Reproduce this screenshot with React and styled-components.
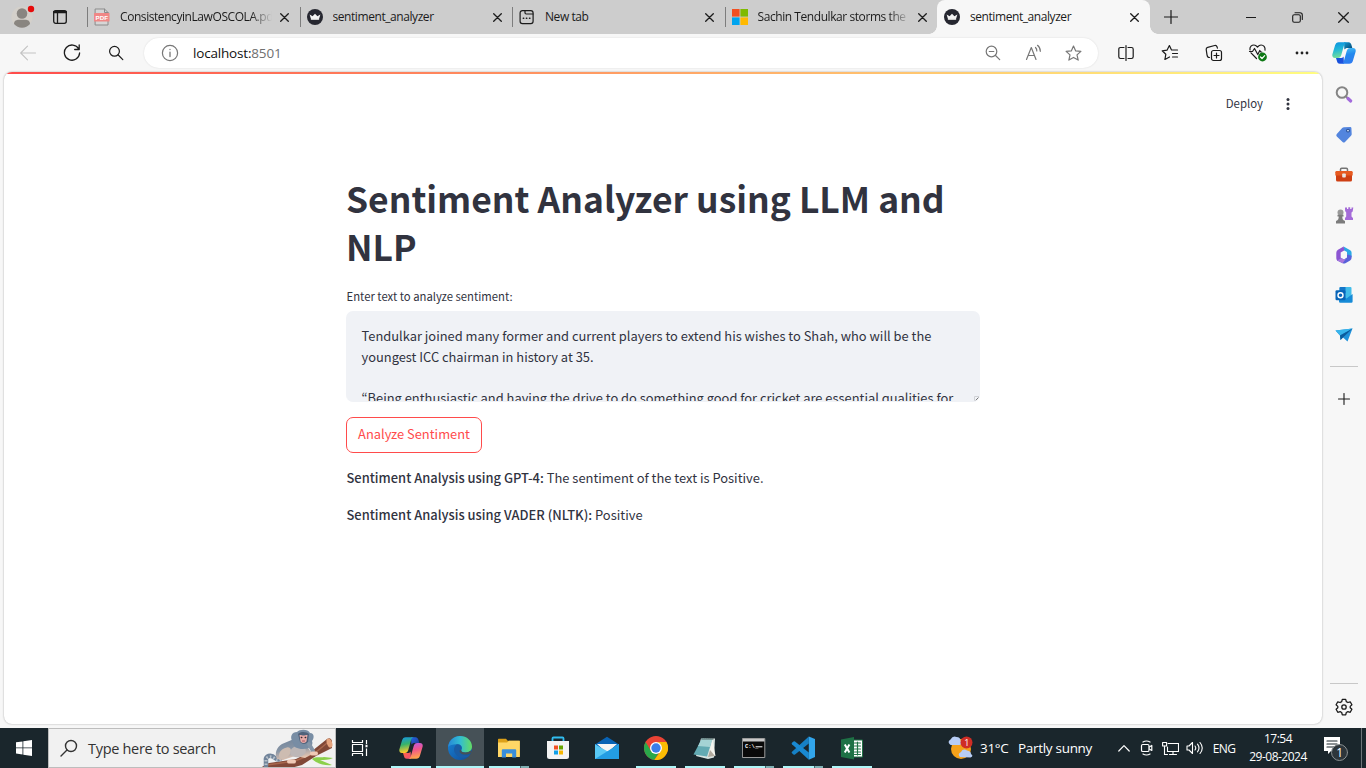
import React from "react";
import styled, { createGlobalStyle } from "styled-components";

const GlobalStyle = createGlobalStyle`
  *, *::before, *::after { box-sizing: border-box; }
  body { margin: 0; overflow: hidden; }
  svg { display: block; flex: none; }
`;

const uiFont = `"Open Sans", "Noto Sans", sans-serif`;
const pageFont = `"Noto Sans CJK KR", "Noto Sans", sans-serif`;

/* ---------- window ---------- */
const Desktop = styled.div`
  width: 1366px;
  height: 768px;
  display: flex;
  flex-direction: column;
  background: #f7f7f7;
  font-family: ${uiFont};
  color: #1b1b1b;
`;
const TabStrip = styled.header`
  display: flex;
  height: 34px;
  background: #cdcdcd;
`;
const StripLead = styled.div`
  display: flex;
  align-items: center;
  width: 87px;
  padding-left: 11px;
  gap: 18px;
`;
const Tab = styled.div`
  position: relative;
  display: flex;
  align-items: center;
  width: 212.5px;
  padding-left: 6px;
  background: ${(p) => (p.$active ? "#f7f7f7" : "transparent")};
  border-radius: ${(p) => (p.$active ? "8px 8px 0 0" : "0")};
  &::before {
    content: "";
    display: ${(p) => (p.$active ? "block" : "none")};
    position: absolute;
    left: -8px;
    bottom: 0;
    width: 8px;
    height: 8px;
    background: radial-gradient(circle at 0 0, #cdcdcd 7.5px, #f7f7f7 8px);
  }
  &::after {
    content: "";
    display: ${(p) => (p.$active ? "block" : "none")};
    position: absolute;
    right: -8px;
    bottom: 0;
    width: 8px;
    height: 8px;
    background: radial-gradient(circle at 100% 0, #cdcdcd 7.5px, #f7f7f7 8px);
  }
`;
const TabRule = styled.span`
  width: 1px;
  height: 20px;
  margin-left: -6px;
  margin-right: 6px;
  background: ${(p) => (p.$hidden ? "transparent" : "#7d7d7d")};
`;
const TabTitle = styled.span`
  width: 152px;
  margin-left: 10px;
  overflow: hidden;
  white-space: nowrap;
  font-size: 12px;
  line-height: 18px;
  letter-spacing: -0.43px;
  ${(p) => p.$fade && "mask-image: linear-gradient(90deg, #000 86%, transparent 100%);"}
`;
const TabClose = styled.div`
  margin-left: 8px;
`;
const NewTab = styled.div`
  display: flex;
  align-items: center;
  width: 43px;
  justify-content: center;
`;
const WindowButtons = styled.div`
  display: flex;
  margin-left: auto;
`;
const WindowButton = styled.div`
  display: flex;
  width: 46px;
  align-items: center;
  justify-content: center;
`;

/* ---------- toolbar ---------- */
const Toolbar = styled.div`
  display: flex;
  align-items: center;
  height: 38px;
  padding-left: 6px;
`;
const ToolCell = styled.div`
  display: flex;
  justify-content: center;
  width: ${(p) => p.$w || 44}px;
`;
const AddressBar = styled.div`
  display: flex;
  align-items: center;
  width: 954px;
  height: 30px;
  margin: 0 6px;
  padding: 0 5px 0 17px;
  border-radius: 15px;
  background: #fff;
  box-shadow: 0 0 2px rgba(0, 0, 0, 0.12);
`;
const Url = styled.span`
  flex: 1;
  margin-left: 14px;
  font-size: 13.5px;
  line-height: 20px;
  letter-spacing: -0.18px;
  color: #111;
  span { color: #707070; }
`;

/* ---------- page and sidebar ---------- */
const Body = styled.div`
  display: flex;
  height: 656px;
`;
const Page = styled.main`
  width: 1318px;
  height: 652px;
  margin-left: 4px;
  border-radius: 8px;
  overflow: hidden;
  background: #fff;
  box-shadow: 0 0 2px rgba(0, 0, 0, 0.35);
  font-family: ${pageFont};
  color: #31333f;
`;
const Decoration = styled.div`
  height: 2px;
  background: linear-gradient(90deg, #ff4b4b, #fffd80);
`;
const AppHeader = styled.div`
  display: flex;
  align-items: center;
  justify-content: flex-end;
  height: 60px;
  padding-right: 28px;
  gap: 19px;
  font-size: 11.4px;
`;
const DeployLink = styled.span`
  padding-bottom: 2px;
`;
const Content = styled.section`
  width: 634px;
  margin: 40px 0 0 342px;
`;
const Title = styled.h1`
  margin: 0;
  font-size: 35.45px;
  font-weight: 700;
  line-height: 48px;
  white-space: nowrap;
`;
const Label = styled.div`
  margin-top: 16px;
  height: 25px;
  padding-left: 0.5px;
  line-height: 20px;
  font-size: 11.3px;
  white-space: nowrap;
`;
const TextBox = styled.div`
  position: relative;
  height: 91px;
  padding: 15.4px 15.5px 0;
  border-radius: 7px;
  border-bottom: 1px solid #f0f2f6;
  background: #f0f2f6;
  overflow: hidden;
  font-size: 12.88px;
  line-height: 20.4px;
  white-space: pre;
`;
const ResizeGrip = styled.svg`
  position: absolute;
  right: 1px;
  bottom: 0;
`;
const Button = styled.div`
  display: flex;
  align-items: center;
  justify-content: center;
  width: 136px;
  height: 36px;
  margin: 15px 0 13px;
  padding-bottom: 3px;
  border: 1px solid #ff4b4b;
  border-radius: 7px;
  color: #ff4b4b;
  font-size: 12.9px;
`;
const Result = styled.p`
  margin: 0 0 14px;
  height: 23px;
  padding-left: 0.5px;
  font-size: 12.93px;
  line-height: 23px;
  white-space: nowrap;
  b { font-weight: 500; }
`;
const Sidebar = styled.aside`
  display: flex;
  flex-direction: column;
  align-items: center;
  width: 44px;
  padding-top: 2px;
`;
const SideCell = styled.div`
  display: flex;
  align-items: center;
  justify-content: center;
  width: 44px;
  height: ${(p) => p.$h || 40}px;
  padding-top: 1px;
`;
const SideRule = styled.div`
  width: 28px;
  height: 1px;
  margin: ${(p) => p.$margin};
  background: #c8c8c8;
`;

/* ---------- taskbar ---------- */
const Taskbar = styled.footer`
  display: flex;
  height: 40px;
  background: #1a262c;
  color: #fff;
`;
const TaskCell = styled.div`
  position: relative;
  display: flex;
  align-items: center;
  justify-content: center;
  width: ${(p) => p.$w || 49}px;
  padding-right: ${(p) => p.$shift || 0}px;
`;
const AppCell = styled(TaskCell)`
  ${(p) => p.$active && "background: #465157; width: 48px; margin-right: 1px;"}
`;
const Running = styled.div`
  position: absolute;
  bottom: 0;
  left: ${(p) => (p.$active ? 0 : 4.5)}px;
  right: ${(p) => (p.$active ? 0 : 4.5)}px;
  height: 2px;
  background: ${(p) => (p.$stacked ? "linear-gradient(90deg, #aef6f8 31px, #47666b 31px, #47666b 32px, #7fb0b3 32px)" : "#aef6f8")};
`;
const SearchBox = styled.div`
  display: flex;
  align-items: center;
  width: 288px;
  border: 1px solid #bdbdbd;
  padding-left: 11px;
  background: #f1f1f1;
  color: #333;
  font-size: 14.5px;
  letter-spacing: -0.3px;
`;
const SearchHint = styled.span`
  flex: 1;
  margin-left: 10px;
  white-space: nowrap;
`;
const Weather = styled.div`
  display: flex;
  align-items: center;
  width: 166px;
  margin-left: auto;
  font-size: 13.5px;
  letter-spacing: -0.3px;
  white-space: nowrap;
`;
const Temperature = styled.span`
  width: 38px;
  margin-left: 7px;
`;
const Language = styled.div`
  display: flex;
  align-items: center;
  justify-content: center;
  width: 32px;
  font-size: 12px;
  letter-spacing: -0.6px;
`;
const Clock = styled.div`
  width: 76px;
  padding-top: 2px;
  text-align: center;
  font-size: 12px;
  line-height: 18px;
  letter-spacing: -0.5px;
`;
const ShowDesktop = styled.div`
  width: 5px;
  border-left: 1px solid #6d7478;
`;

/* ---------- icons ---------- */
const Icon = ({ w = 20, h = w, children, ...rest }) => (
  <svg width={w} height={h} viewBox={`0 0 ${w} ${h}`} fill="none" stroke="currentColor" strokeWidth="1.2" strokeLinecap="round" strokeLinejoin="round" {...rest}>
    {children}
  </svg>
);
const CloseIcon = ({ size = 9 }) => (
  <Icon w={size} strokeWidth="1.3"><path d={`M.7.7 ${size - 0.7} ${size - 0.7}M${size - 0.7} .7.7 ${size - 0.7}`} /></Icon>
);
const Avatar = () => (
  <Icon w={24} h={24} stroke="none">
    <circle cx="11" cy="12" r="10.6" fill="#d4d0ca" />
    <circle cx="11" cy="8.5" r="5.3" fill="#898580" />
    <path d="M3 19c0-3.5 3-4.2 4.500-4.200h7c1.800 0 4.500.9 4.500 4.200a10.600 10.600 0 0 1-16 0Z" fill="#898580" />
    <circle cx="20" cy="4" r="3.200" fill="#e60b0b" />
  </Icon>
);
const TabMenuIcon = () => (
  <Icon w={14} strokeWidth="1.300"><rect x=".7" y=".7" width="12.600" height="12.600" rx="2" /><path d="M1 2h12" strokeWidth="2.500" /><path d="M4.500 3v10" /></Icon>
);
const PdfIcon = () => (
  <Icon w={16} h={18} stroke="none">
    <path d="M1.500 1h9L14 4.500V17H1.500z" fill="#d6d6d6" stroke="#8b8b8b" strokeWidth="1" />
    <path d="M10.500 1v3.500H14" stroke="#8b8b8b" strokeWidth="1" />
    <rect x="0" y="5" width="15.500" height="8.500" rx=".6" fill="#f08785" />
    <text x="1.600" y="11.500" fontSize="6.200" fontWeight="700" fontFamily="Liberation Sans, sans-serif" fill="#fff">PDF</text>
  </Icon>
);
const CrownIcon = () => (
  <Icon w={16} stroke="none"><circle cx="8" cy="8" r="8" fill="#262730" /><path d="m2.600 5.500 3 1.700L8 4.800l2.400 2.400 3-1.700-1.700 5.500H4.300z" fill="#f4f4f4" /><path d="M4.200 10.400h7.600" stroke="#bbb" strokeWidth=".8" /></Icon>
);
const NewTabIcon = () => (
  <Icon w={16} strokeWidth="1.200"><rect x="1.100" y="1.600" width="13" height="13" rx="2.300" /><path d="M6 1.800v2c0 .8.400 1.200 1.200 1.200h6.700" /><path d="M4.300 9.200h.4M7.400 9.200h.4M10.500 9.200h.4" strokeWidth="1.500" /></Icon>
);
const MsIcon = () => (
  <Icon w={16} stroke="none"><path fill="#f25022" d="M0 0h7.600v7.600H0z" /><path fill="#7fba00" d="M8.400 0H16v7.600H8.400z" /><path fill="#00a4ef" d="M0 8.400h7.600V16H0z" /><path fill="#ffb900" d="M8.400 8.400H16V16H8.400z" /></Icon>
);
const MagnifierIcon = (p) => (
  <Icon w={16} {...p}><circle cx="6.500" cy="6.300" r="4.900" /><path d="m10.200 10 4.600 4.600" /></Icon>
);
const CopilotIcon = ({ vivid }) => {
  const id = vivid ? "cv" : "cb";
  const stops = vivid
    ? [["#1597e8", "#36b36a", "#ffcb2d"], ["#b35cf0", "#f0568a", "#ffa24d"], ["#2167e8", "#23348f"], ["#ff6a3d", "#f04b7b"]]
    : [["#0a8fe0", "#20b7d8", "#72dd9b"], ["#47c5f6", "#2389ee", "#2f7df0"], ["#0e9bd4", "#08426d"], ["#0c4fd8", "#2352df"]];
  return (
    <Icon w={24} h={24} stroke="none">
      <defs>
        {stops.map((s, i) => (
          <linearGradient key={i} id={id + i} x1="0" y1="0" x2={i < 2 ? 0.2 : 1} y2="1">
            {s.map((c, j) => <stop key={c} offset={j / (s.length - 1)} stopColor={c} />)}
          </linearGradient>
        ))}
      </defs>
      <path d="M12 1.300h4.600c1.500 0 2.300 1 2.700 2.300l1 3.400h-4.500c-1.900 0-2.600.6-3.400 1.600z" fill={`url(#${id}2)`} />
      <path d="M12 22.700H7.800c-1.500 0-2.300-1-2.700-2.300L4 17h4.200c1.900 0 2.600-.6 3.400-1.600z" fill={`url(#${id}3)`} />
      <path d="M6.800 1.300H15c-1.500 0-2.300 1-2.900 2.800L9.300 14c-.6 2-1.600 3-3.500 3H3C.8 17-.1 15.500.4 13.200L3 4.600C3.600 2.500 4.800 1.300 6.800 1.300Z" fill={`url(#${id}0)`} />
      <path d="M17.200 22.700H9c1.500 0 2.300-1 2.900-2.800L14.700 10c.6-2 1.600-3 3.500-3H21c2.200 0 3.100 1.500 2.600 3.800L21 19.400c-.6 2.100-1.800 3.300-3.800 3.300Z" fill={`url(#${id}1)`} />
    </Icon>
  );
};
const StarPath = "m8.500 1 2.200 4.900 5.200.5-3.900 3.500 1.200 5.200-4.700-2.700-4.600 2.700L5 9.900 1.100 6.400l5.200-.5z";

const sideIcons = [
  <Icon w={20}><circle cx="8" cy="7.500" r="5.300" stroke="#858585" strokeWidth="2" /><path d="m12.500 12 1.300 1.300" stroke="#858585" strokeWidth="2" /><path d="m14 13.500 2.700 2.500" stroke="#a36bdc" strokeWidth="3.200" /></Icon>,
  <Icon w={20} stroke="none"><path d="M10 2.200 16.300 2q1 0 1.100 1l.3 6.200q0 .9-.7 1.600l-6 6.100q-1.200 1.100-2.400 0l-5.800-5.500q-1.100-1.200 0-2.300L8.200 3q.8-.7 1.800-.8Z" fill="#5385de" /><circle cx="14" cy="5.600" r="1.900" fill="#254c91" /><circle cx="14" cy="5.600" r=".9" fill="#d7e7ff" /></Icon>,
  <Icon w={20} stroke="none"><path d="M6.500 6V4.400q0-1.200 1.200-1.200h4.600q1.200 0 1.200 1.200V6" stroke="#747474" strokeWidth="1.500" /><rect x="2" y="6" width="16" height="10.500" rx="1.500" fill="#ce3f13" /><path d="M1.300 7.200Q1.300 6 2.800 6h14.400q1.500 0 1.500 1.200v3.300H1.300z" fill="#e65a20" /><rect x="8.200" y="8.500" width="3.600" height="4" rx=".8" fill="#e9e5e2" /></Icon>,
  <Icon w={20} stroke="none"><path d="M11 2.500h2V4h1.300V2.300h1.900V4h1.300V2.500h1.800l-.6 4-1.200 1v4l1.500 1.500v2h-8v-2l1.200-1.500v-4L11.100 6z" fill="#a46bd8" /><circle cx="6.500" cy="7.500" r="3" fill="#989898" /><path d="M3.500 9.800h6v1.700H8.300c0 2 .3 3.500 2.700 4.500v2.500H2V16c2.400-1 2.700-2.500 2.700-4.500H3.500z" fill="#7c7c7c" /></Icon>,
  <Icon w={20} stroke="none"><path d="m9.600 1.600 6.600 3.600q1.400.9 1.400 2.500v4.200L13 9.500V7L9.500 5z" fill="#2aa9e6" /><path d="M9.600 1.600 4 4.800q-1.700 1-1.700 3v5.500q0 1.700 1.400 2.600l4.200-2.400-1.200-1V7.500l3.800-2.300z" fill="#8c55d2" /><path d="m3.200 15.500 5.400 2.700q1.500.7 2.800 0l4.700-2.800q1.500-1 1.500-2.700v-2L13 9.200v3.400l-3 1.900-2.800-1.400z" fill="#5961da" /><path d="m3.200 15.500 5.400 2.700 3.900-5.100-2.500 1.400-2.800-1.500z" fill="#a977dc" /></Icon>,
  <Icon w={20} stroke="none"><rect x="5.500" y="2" width="12" height="13" rx="1" fill="#42bdea" /><path d="M5.500 3q0-1 1-1h5v6h-6z" fill="#1577c9" /><path d="m5 9 7.500 4.500L18.600 9v7.500q0 1.200-1.200 1.200H6.200Q5 17.700 5 16.500z" fill="#168bd7" /><rect x="1.500" y="5.200" width="10" height="10" rx="1.200" fill="#0865b8" /><circle cx="6.500" cy="10.200" r="2.500" stroke="#fff" strokeWidth="1.400" /></Icon>,
  <Icon w={20} stroke="none"><path d="M1.500 5.500 18.500 3.500 13.500 16.500 9 12.500 6.500 15 6 10.500z" fill="#1f91da" /><path d="M18.500 3.500 6 10.500 1.500 5.500z" fill="#38b5ec" /><path d="m18.500 3.500-9.500 9L6.500 15 6 10.500z" fill="#0b5c9d" /></Icon>,
];

const StoreIcon = () => (
  <Icon w={24} stroke="none"><path d="M6.500 5V2.500q0-1 1-1h9q1 0 1 1V5" stroke="#31bdf0" strokeWidth="1.800" /><path d="M1 5h22v15.500q0 2.500-2.500 2.500h-17Q1 23 1 20.500z" fill="#f3f3f3" /><path d="M8 9.500h4v4H8z" fill="#f25022" /><path d="M13 9.500h4v4h-4z" fill="#67a500" /><path d="M8 14.500h4v4H8z" fill="#109fe8" /><path d="M13 14.500h4v4h-4z" fill="#f7b600" /></Icon>
);
const apps = [
  { icon: <CopilotIcon vivid />, running: true },
  {
    running: true, active: true,
    icon: (
      <Icon w={24} stroke="none">
        <defs>
          <linearGradient id="edgeTop" x1="0" x2="1"><stop stopColor="#2787d8" /><stop offset=".5" stopColor="#32bdd2" /><stop offset="1" stopColor="#65dc62" /></linearGradient>
          <linearGradient id="edgeLow" x1="0" y1="0" x2="1" y2="1"><stop stopColor="#1785d8" /><stop offset="1" stopColor="#114a97" /></linearGradient>
        </defs>
        <circle cx="12" cy="12" r="12" fill="url(#edgeLow)" />
        <path d="M.1 11C.9 4.200 6 0 12 0c7 0 12 5 12 10.500 0 4-3 6-6.500 6-3.300 0-4.600-1.200-4.200-2.200 1.800-2.500.3-6-4.300-6C5 8.200 1.500 9 .1 11Z" fill="url(#edgeTop)" />
        <path d="M9 8.300c-3 1.700-4.200 6.200-1.200 9.900 2.500 3.500 7.200 4.500 12 2.900l2.400-2.500c-4 1.600-8.500.9-10-2.300-.9-2 .9-3 1-4.700.1-1.900-1.700-3.800-4.200-3.300Z" fill="#1a5ca4" />
        <path d="M13.300 14.300c-.5 1.200.9 2.200 4.200 2.200 1.900 0 3.500-.6 4.800-1.700.8 0 1.500.8.500 2.500-4.500 2.500-11 1.100-11.200-1.900 0-1.700 1.300-2.100 1.700-1.100Z" fill="#465157" />
      </Icon>
    ),
  },
  {
    running: true, stacked: true,
    icon: <Icon w={24} stroke="none"><path d="M1 3.500q0-.7.7-.7H9l1.700 2H22q.8 0 .8.800v14.900H1z" fill="#dca018" /><path d="M1 6.500h9L12 4.800h10.800V21H1z" fill="#ffd766" /><path d="M4.800 21.500v-7.300q0-1 1-1h12.400q1 0 1 1v7.300h-4v-4H9v4z" fill="#388edb" /></Icon>,
  },
  { icon: <StoreIcon /> },
  { icon: <Icon w={24} stroke="none"><path d="M0 8.500 12 .7l12 7.800v3H0z" fill="#0863b5" /><path d="M2 8h20L12 17z" fill="#f5f5f5" /><path d="m0 8 12 8.500L24 8v15H0z" fill="#45b9ec" /><path d="M0 8.500V23h2L14 16l-2-1z" fill="#59c8f4" /><path d="m0 23 12-7.500L24 8v15z" fill="#239de3" /></Icon> },
  {
    running: true,
    icon: <Icon w={24} stroke="none"><circle cx="12" cy="12" r="12" fill="#ea4335" /><path d="M1.600 6A12 12 0 0 0 10.300 23.900l5.400-8.700a5.500 5.500 0 0 1-8.500 0z" fill="#2aa84a" /><path d="M10.300 23.900A12 12 0 0 0 22.400 6H12a6 6 0 0 1 4.800 9z" fill="#fbbc04" /><circle cx="12" cy="12" r="6" fill="#fff" /><circle cx="12" cy="12" r="4.700" fill="#3b7eea" /></Icon>,
  },
  {
    running: true,
    icon: <Icon w={24} stroke="none"><path d="M8 2.500h14l-1 19-6 1.500-12-3z" fill="#d8e3e1" /><path d="M9 2.500 19.500 3 14 20.500 .5 18.500z" fill="#63aab3" /><path d="M9 2.500 19.500 3l-2.500 8-12-1z" fill="#a5d3d5" /><path d="m15 21 4.500-18L22.500 20z" fill="#f3f3ed" /><path d="m15 21 2-7 5 6z" fill="#b1a99d" /><path d="M9 3h11" stroke="#50605f" strokeDasharray="1 1" /></Icon>,
  },
  {
    running: true, stacked: true,
    icon: <Icon w={24} h={20} stroke="none"><rect x=".8" y=".5" width="22" height="19" fill="#090909" stroke="#9c9c9c" strokeWidth="1" /><path d="M1 1h21.500v2.500H1z" fill="#c9c9c9" /><text x="3" y="9.500" fontFamily="Liberation Mono, monospace" fontWeight="700" fontSize="5.500" fill="#fff">C:\_</text><path d="M14 8.800h6" stroke="#fff" strokeWidth="1" /></Icon>,
  },
  {
    running: true, stacked: true,
    icon: <Icon w={24} stroke="none"><path d="M17.800.5 1 15.800q-.8.700 0 1.500l1.500 1.300q.7.500 1.500 0L17.800 7.500z" fill="#1680c5" /><path d="M17.800 23.700 1 8.300q-.8-.8 0-1.500l1.500-1.300q.7-.5 1.500 0l13.800 11z" fill="#1989d2" /><path d="M17.800.5 24 3v18l-6.200 2.700z" fill="#32a5eb" /></Icon>,
  },
  {
    running: true,
    icon: <Icon w={24} stroke="none"><path d="M12 4h10.500v17H12z" fill="#fff" stroke="#217346" strokeWidth="1" /><path d="M14.500 7h6M14.500 10h6M14.500 13h6M14.500 16h6M14.500 18.500h6M17.500 6v13" stroke="#217346" strokeWidth="1.200" /><path d="M1 3.500 14 1v22.500L1 21z" fill="#1e7145" /><path d="m4.800 8.500 4.600 8M9.400 8.500l-4.600 8" stroke="#fff" strokeWidth="2" strokeLinecap="butt" /></Icon>,
  },
];

const Marmoset = () => (
  <Icon w={76} h={38} stroke="none">
    <defs><linearGradient id="fur" x1="0" y1="0" x2=".3" y2="1"><stop stopColor="#71849b" /><stop offset=".55" stopColor="#8895a5" /><stop offset="1" stopColor="#e3c4b0" /></linearGradient></defs>
    <path d="M53 30c4-3 9-1 12-2l9 1c-4 2-9 2-13 2l12 5c-6 1-15-1-20-6Z" fill="#8bd04b" />
    <path d="M1 39 10 34l14-2 13-2 16-8L68 10q4-2 5 2v7L57 27 43 36l-11 3z" fill="#814837" />
    <path d="m8 36 28-4 20-8 12-10" stroke="#a8664c" strokeWidth="1.500" />
    <ellipse cx="70.500" cy="14" rx="2.600" ry="4.700" transform="rotate(-20 70.500 14)" fill="#e4a37d" />
    <path d="M7 37v-6c-1-4 5-6 9-2 3 3 6 1 9-2" stroke="#71849a" strokeWidth="4.500" />
    <path d="M7 36v-5c0-3 5-5 9-1 3 3 6 0 8-2" stroke="#b8c1ca" strokeWidth="3" strokeDasharray="1.500 2" strokeLinecap="butt" />
    <path d="M18 30c-3-6 0-12 5-15l12-5 13 7 5 8-7 4-10-2-12 4z" fill="url(#fur)" />
    <ellipse cx="26" cy="24" rx="7" ry="4.500" transform="rotate(-40 26 24)" fill="#cdbcb1" />
    <ellipse cx="39" cy="22.500" rx="8" ry="5.500" transform="rotate(-12 39 22.500)" fill="#bdb7b7" />
    <path d="M34 13c-4-5-1-10 4-10 3-3 11-3 13 1 5 0 4 6 2 8 2 5-3 8-9 8s-10-2-10-7Z" fill="#788da4" />
    <path d="M39 5c3-3 9-2 11 0l-1 8q-4 4-8 0z" fill="#50627a" />
    <path d="M40.500 6c2 0 3 .5 4 .5s2-.5 4-.5l-1 6.500q-3 3-6 0z" fill="#e6aaa7" />
    <path d="M42.300 8.500h.5M46.200 8.500h.5" stroke="#352c34" strokeWidth="1.300" /><path d="M43.500 12h2" stroke="#a95260" strokeWidth="1" />
    <path d="m50 15 4 7" stroke="#8495a8" strokeWidth="4" />
    <path d="M30 32.500h5M53 24.500h4" stroke="#f0c9b5" strokeWidth="4" />
  </Icon>
);

const tabs = [
  { title: "ConsistencyinLawOSCOLA.pdf", icon: <PdfIcon />, fade: true },
  { title: "sentiment_analyzer", icon: <CrownIcon /> },
  { title: "New tab", icon: <NewTabIcon /> },
  { title: "Sachin Tendulkar storms the", icon: <MsIcon />, fade: true },
  { title: "sentiment_analyzer", icon: <CrownIcon />, active: true },
];

export default function App() {
  return (
    <Desktop>
      <GlobalStyle />
      <TabStrip>
        <StripLead><Avatar /><TabMenuIcon /></StripLead>
        {tabs.map((t, i) => (
          <Tab key={i} $active={t.active}>
            <TabRule $hidden={t.active} />
            {t.icon}
            <TabTitle $fade={t.fade}>{t.title}</TabTitle>
            <TabClose><CloseIcon /></TabClose>
          </Tab>
        ))}
        <NewTab><Icon w={14} strokeWidth="1.200"><path d="M7 .5v13M.5 7h13" /></Icon></NewTab>
        <WindowButtons>
          <WindowButton><Icon w={10} strokeWidth="1"><path d="M0 5.500h10" /></Icon></WindowButton>
          <WindowButton><Icon w={11} strokeWidth="1.100"><rect x=".7" y="2.700" width="7.600" height="7.600" rx="1.500" /><path d="M3 .7h5q2.300 0 2.300 2.300v4.500" /></Icon></WindowButton>
          <WindowButton><CloseIcon size={11} /></WindowButton>
        </WindowButtons>
      </TabStrip>

      <Toolbar>
        <ToolCell><Icon w={16} color="#c3c3c3" strokeWidth="1.100"><path d="M15.500 8H.7M7.500 1.200.7 8l6.800 6.800" /></Icon></ToolCell>
        <ToolCell><Icon w={18} strokeWidth="1.300"><path d="M15.700 5A7.600 7.600 0 1 0 16.600 9M16.200 1v4.500h-4.500" /></Icon></ToolCell>
        <ToolCell><MagnifierIcon /></ToolCell>
        <AddressBar>
          <Icon w={18} color="#777"><circle cx="9" cy="9" r="7.600" /><path d="M9 8.200v4.300M9 5.400v.2" strokeWidth="1.300" /></Icon>
          <Url>localhost:<span>8501</span></Url>
          <ToolCell $w={40}><Icon w={16} color="#777"><circle cx="6.500" cy="6.500" r="5.300" /><path d="m10.500 10.500 4.200 4.200M4.300 6.500h4.500" /></Icon></ToolCell>
          <ToolCell $w={40}><Icon w={18} color="#777" strokeWidth="1.200"><path d="m2.500 15.500 4.800-12 4.700 12M4.100 11.500h6.300M11.500 3.500q1.500 1.500 1.300 3.500M13.500 1.300q2.900 2.400 2.800 6" /></Icon></ToolCell>
          <ToolCell $w={40}><Icon w={17} color="#777"><path d={StarPath} /></Icon></ToolCell>
        </AddressBar>
        <ToolCell><Icon w={18} strokeWidth="1.200"><path d="M7 3.500H3.500q-1.700 0-1.700 1.700v7.600q0 1.700 1.700 1.700H7M11 3.500h3.500q1.700 0 1.700 1.700v7.600q0 1.700-1.700 1.700H11M9 1.500v15" /></Icon></ToolCell>
        <ToolCell><Icon w={18}><path d="M10.500 6 8.400 1.500 6 6.200l-4.800.6 3.600 3.500-.9 5.200L8.500 13M10.500 6H16.500M11.500 9.500h5M11.500 13h5" /></Icon></ToolCell>
        <ToolCell><Icon w={18}><rect x="6.500" y="6.500" width="10" height="10" rx="2" /><path d="M11.500 9v5M9 11.500h5M4.500 13.500C3 13.500 2.200 12 2 10.800L1.200 5.500Q1 3.700 2.700 3.300l7-1.800q1.700-.4 2.300 1.200l.4 1.500" /></Icon></ToolCell>
        <ToolCell><Icon w={20}><path d="M8.500 15.500 3 9.800M2 7C1.300 3.500 4 2 6 2c2 0 3 1.500 3.500 2C10 3.500 11 2 13 2c2.500 0 4.500 2 4 5.200M1.500 8.500h3L6.500 5.500l3.300 6 2-4 1 1.500h1" /><circle cx="14.500" cy="14" r="4.400" fill="#0d7814" stroke="none" /><path d="m12.500 14 1.500 1.500 2.700-2.800" stroke="#fff" /></Icon></ToolCell>
        <ToolCell><Icon w={16} h={4} stroke="none" fill="#222"><circle cx="3" cy="2" r="1.400" /><circle cx="8" cy="2" r="1.400" /><circle cx="13" cy="2" r="1.400" /></Icon></ToolCell>
        <ToolCell $w={40}><CopilotIcon /></ToolCell>
      </Toolbar>

      <Body>
        <Page>
          <Decoration />
          <AppHeader>
            <DeployLink>Deploy</DeployLink>
            <Icon w={12} h={14} stroke="none" fill="#31333f"><circle cx="6" cy="2.500" r="1.500" /><circle cx="6" cy="7" r="1.500" /><circle cx="6" cy="11.500" r="1.500" /></Icon>
          </AppHeader>
          <Content>
            <Title>Sentiment Analyzer using LLM and<br />NLP</Title>
            <Label>Enter text to analyze sentiment:</Label>
            <TextBox>
              {"Tendulkar joined many former and current players to extend his wishes to Shah, who will be the\nyoungest ICC chairman in history at 35.\n\n“Being enthusiastic and having the drive to do something good for cricket are essential qualities for"}
              <ResizeGrip width="5" height="5" viewBox="0 0 5 5"><path d="M.5 5V.5H5" stroke="#d0d2d6" fill="none" /><path d="M1.500 4.500 4.500 1.500" stroke="#777" /></ResizeGrip>
            </TextBox>
            <Button>Analyze Sentiment</Button>
            <Result><b>Sentiment Analysis using GPT-4:</b> The sentiment of the text is Positive.</Result>
            <Result><b>Sentiment Analysis using VADER (NLTK):</b> Positive</Result>
          </Content>
        </Page>
        <Sidebar>
          {sideIcons.map((icon, i) => <SideCell key={i}>{icon}</SideCell>)}
          <SideRule $margin="12px 0 11px" />
          <SideCell><Icon w={12} strokeWidth="1.100"><path d="M6 .5v11M.5 6h11" /></Icon></SideCell>
          <SideRule $margin="auto 0 0" />
          <SideCell $h={44}><Icon w={18} strokeWidth="1.300"><circle cx="9" cy="9" r="2.200" /><path d="m7.300 1.300-.6 2.300-1.600.9-2.300-.7-1.700 3L2.800 8.400v1.400l-1.700 1.500 1.700 3 2.300-.6 1.600.8.600 2.300h3.400l.6-2.300 1.600-.8 2.300.6 1.700-3-1.700-1.500V8.400l1.700-1.600-1.700-3-2.300.7-1.600-.9-.6-2.300z" /></Icon></SideCell>
        </Sidebar>
      </Body>

      <Taskbar>
        <TaskCell $w={48}><Icon w={16} stroke="none" fill="#fff"><path d="M0 2.300 6.500 1.400v6.100H0zM7.300 1.300 16 0v7.500H7.300zM0 8.300h6.500v6.200L0 13.600zM7.300 8.300H16V16l-8.700-1.300z" /></Icon></TaskCell>
        <SearchBox>
          <Icon w={18} strokeWidth="1.400"><circle cx="11" cy="7" r="5.500" /><path d="m7 11-6 6" /></Icon>
          <SearchHint>Type here to search</SearchHint>
          <Marmoset />
        </SearchBox>
        <TaskCell $w={50.5} $shift={2}><Icon w={18} strokeWidth="1.200"><path d="M1.500 1.500v2h10v-2M1.500 16.500v-2h10v2M15.500 1.500v3M15.500 10v6.500" strokeLinecap="square" /><rect x="1.500" y="5.500" width="10" height="7" /><path d="M14.500 7h2" strokeWidth="2.500" strokeLinecap="butt" /></Icon></TaskCell>
        {apps.map((a, i) => (
          <AppCell key={i} $active={a.active}>
            {a.icon}
            {a.running && <Running $active={a.active} $stacked={a.stacked} />}
          </AppCell>
        ))}
        <Weather>
          <Icon w={25} h={24} stroke="none"><circle cx="13" cy="13" r="10" fill="#f4a11a" /><path d="M2 8.500q-3-3 .5-5Q5-1 8.500 1q4 0 4 4 3 3-1 4H4q-1.500 0-2-.5ZM12 21q-3-3 1-5 2-4 6-1.500 4 .5 4 3.500 3 2-.5 3.500z" fill="#b7cdf5" /><circle cx="18.500" cy="6.500" r="6" fill="#cf2d25" /><text x="16.300" y="10" fontSize="9" fill="#fff" fontFamily={uiFont}>1</text></Icon>
          <Temperature>31°C</Temperature>
          <span>Partly sunny</span>
        </Weather>
        <TaskCell $w={20}><Icon w={12} h={8}><path d="m.8 7 5.200-5.300L11.200 7" /></Icon></TaskCell>
        <TaskCell $w={25}><Icon w={14} h={16}><rect x="1.500" y="4.500" width="7.500" height="7" rx="1.300" /><path d="m9.300 7 2.500-1.500v5L9.300 9M3 2Q6.500 0 10 2M3 14q3.500 2 7 0" /></Icon></TaskCell>
        <TaskCell $w={23}><Icon w={17} h={16} strokeWidth="1.100"><path d="M6 3.500h10.500v8H5.500V7M11 11.500v3M7.500 14.500h7M2.500 6v8.500h3" strokeLinejoin="miter" /><rect x=".6" y="2.500" width="4" height="3.500" /></Icon></TaskCell>
        <TaskCell $w={26}><Icon w={18} h={14} strokeWidth="1.100"><path d="M1 5h2l3.500-3.500v11L3 9H1zM9 5q1.500 2 0 4M11.500 3.200q3 3.800 0 7.600M14 1.500q4.500 5.500 0 11" /></Icon></TaskCell>
        <Language>ENG</Language>
        <Clock>17:54<br />29-08-2024</Clock>
        <TaskCell $w={45} $shift={5}><Icon w={26} h={28} stroke="none"><path d="M1 3h16v14H8l-3 3v-3H1z" fill="#fff" /><path d="M4 7h10M4 10h10M4 13h8" stroke="#1a262c" strokeWidth="1.200" /><circle cx="16.500" cy="18.500" r="8" fill="#2d363b" stroke="#8a8f91" strokeWidth="1" /><text x="13.300" y="23" fontSize="12" fill="#fff" fontFamily={uiFont}>1</text></Icon></TaskCell>
        <ShowDesktop />
      </Taskbar>
    </Desktop>
  );
}
